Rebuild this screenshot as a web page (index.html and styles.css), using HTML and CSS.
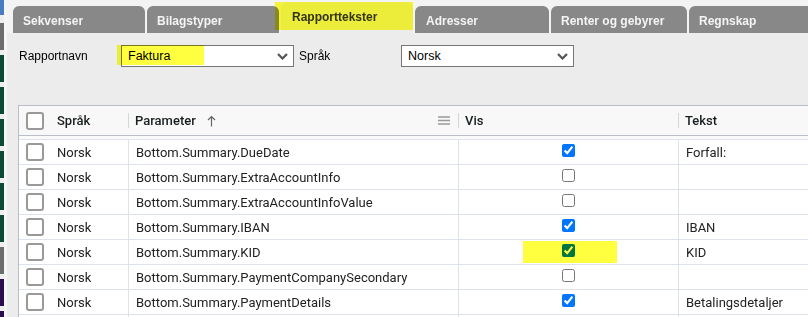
FILE: index.html
```html
<!DOCTYPE html>
<html lang="no">
  <head>
    <meta charset="UTF-8" />
    <title>Rapporttekster</title>
    <link rel="stylesheet" href="styles.css">
  </head>
  <body>
    <div class="app">
      <aside class="rail">
        <span class="blk blk-blue"></span>
        <span class="blk blk-grey"></span>
        <span class="blk blk-green"></span>
        <span class="blk blk-green"></span>
        <span class="blk blk-green"></span>
        <span class="blk blk-green"></span>
        <span class="blk blk-green"></span>
        <span class="blk blk-green"></span>
        <span class="blk blk-grey"></span>
        <span class="blk blk-purple"></span>
        <span class="blk blk-purple"></span>
      </aside>

      <main class="main">
        <nav class="tabs">
          <div class="tab">Sekvenser</div>
          <div class="tab">Bilagstyper</div>
          <div class="tab active">Rapporttekster<span class="hl hl-tab"></span></div>
          <div class="tab tab-adr">Adresser</div>
          <div class="tab tab-rent">Renter og gebyrer</div>
          <div class="tab">Regnskap</div>
        </nav>

        <div class="filters">
          <label>Rapportnavn</label>
          <div class="select">
            <span>Faktura</span>
            <svg class="chev" width="11" height="7" viewBox="0 0 11 7"><path d="M1 1 L5.5 5.5 L10 1" fill="none" stroke="#555" stroke-width="2.2"/></svg>
            <span class="hl hl-sel"></span>
          </div>
          <label class="lbl-lang">Språk</label>
          <div class="select">
            <span>Norsk</span>
            <svg class="chev" width="11" height="7" viewBox="0 0 11 7"><path d="M1 1 L5.5 5.5 L10 1" fill="none" stroke="#555" stroke-width="2.2"/></svg>
          </div>
        </div>

        <div class="grid">
          <div class="grid-head">
            <div class="hcell"><span class="pick"></span>Språk</div>
            <div class="hcell div">
              Parameter
              <svg class="sort" width="9" height="12" viewBox="0 0 9 12"><path d="M4.5 11.5 V1.5 M1 5 L4.5 1.5 L8 5" fill="none" stroke="#666" stroke-width="1.2"/></svg>
              <svg class="menu" width="12" height="9" viewBox="0 0 12 9"><path d="M0 1 H12 M0 4.5 H12 M0 8 H12" stroke="#999" stroke-width="1.4"/></svg>
            </div>
            <div class="hcell div">Vis</div>
            <div class="hcell div">Tekst</div>
          </div>
          <div class="grid-gap"></div>

          <div class="row">
            <div class="cell"><span class="pick"></span>Norsk</div>
            <div class="cell">Bottom.Summary.DueDate</div>
            <div class="cell vis"><input type="checkbox" checked></div>
            <div class="cell">Forfall:</div>
          </div>
          <div class="row">
            <div class="cell"><span class="pick"></span>Norsk</div>
            <div class="cell">Bottom.Summary.ExtraAccountInfo</div>
            <div class="cell vis"><input type="checkbox"></div>
            <div class="cell"></div>
          </div>
          <div class="row">
            <div class="cell"><span class="pick"></span>Norsk</div>
            <div class="cell">Bottom.Summary.ExtraAccountInfoValue</div>
            <div class="cell vis"><input type="checkbox"></div>
            <div class="cell"></div>
          </div>
          <div class="row">
            <div class="cell"><span class="pick"></span>Norsk</div>
            <div class="cell">Bottom.Summary.IBAN</div>
            <div class="cell vis"><input type="checkbox" checked></div>
            <div class="cell">IBAN</div>
          </div>
          <div class="row">
            <div class="cell"><span class="pick"></span>Norsk</div>
            <div class="cell">Bottom.Summary.KID</div>
            <div class="cell vis"><input type="checkbox" checked><span class="hl hl-kid"></span></div>
            <div class="cell">KID</div>
          </div>
          <div class="row">
            <div class="cell"><span class="pick"></span>Norsk</div>
            <div class="cell">Bottom.Summary.PaymentCompanySecondary</div>
            <div class="cell vis"><input type="checkbox"></div>
            <div class="cell"></div>
          </div>
          <div class="row">
            <div class="cell"><span class="pick"></span>Norsk</div>
            <div class="cell">Bottom.Summary.PaymentDetails</div>
            <div class="cell vis"><input type="checkbox" checked></div>
            <div class="cell">Betalingsdetaljer</div>
          </div>
          <div class="row">
            <div class="cell"></div>
            <div class="cell"></div>
            <div class="cell vis"></div>
            <div class="cell"></div>
          </div>
        </div>
      </main>
    </div>
  </body>
</html>
```

FILE: styles.css
```css
body {
  margin: 0;
  font-family: "Liberation Sans", Arial, sans-serif;
  background-color: #ececec;
  overflow: hidden;
}

.app {
  display: flex;
  height: 317px;
  overflow: hidden;
}

/* left app rail (cropped) */
.rail {
  width: 4px;
  display: flex;
  flex-direction: column;
  gap: 5px;
  background-color: #eeeeee;
}

.blk {
  height: 27px;
  flex: none;
}

.blk-blue {
  height: 15px;
  margin-bottom: 3px;
  background-color: #4a7cc4;
}

.blk-grey {
  background-color: #6d6d6d;
}

.blk-green {
  background-color: #0d4a33;
}

.blk-purple {
  background-color: #2b0d4f;
}

.main {
  flex: 1;
  min-width: 0;
  overflow: hidden;
  border-left: 3px solid #f6f6f6;
  background-color: #ececec;
}

/* tabs */
.tabs {
  display: flex;
  align-items: flex-end;
  gap: 2px;
  height: 31px;
  padding: 2px 0 0 6px;
  background-color: #f3f3f3;
}

.tab {
  flex: none;
  box-sizing: border-box;
  width: 132px;
  height: 27px;
  padding: 8px 10px 0;
  background-color: #888888;
  color: #f4f4f4;
  font-size: 12px;
  font-weight: bold;
  line-height: 14px;
  border-radius: 6px 6px 0 0;
  white-space: nowrap;
}

.tab.active {
  position: relative;
  height: 31px;
  padding-left: 11px;
  background-color: #ececec;
  color: #333;
}

.tab-adr {
  width: 134px;
  padding-left: 11px;
}

.tab-rent {
  width: 136px;
}

/* marker highlights */
.hl {
  position: absolute;
  background-color: #ffff40;
  mix-blend-mode: multiply;
  pointer-events: none;
}

.hl-tab {
  left: -6px;
  top: 0;
  width: 138px;
  height: 28px;
}

.hl-sel {
  left: -5px;
  top: -1px;
  width: 87px;
  height: 20px;
}

.hl-kid {
  left: 64px;
  top: 1px;
  width: 94px;
  height: 22px;
}

/* report / language pickers */
.filters {
  display: flex;
  align-items: center;
  height: 22px;
  padding: 12px 0 0 12px;
}

.filters label {
  width: 102px;
  font-size: 12px;
  color: #000;
}

.filters .lbl-lang {
  margin-left: 5px;
}

.select {
  position: relative;
  display: flex;
  align-items: center;
  box-sizing: border-box;
  width: 173px;
  height: 22px;
  padding: 0 5px 0 6px;
  border: 1px solid #767676;
  background-color: #fff;
  font-size: 12.5px;
  color: #000;
}

.chev {
  margin-left: auto;
}

/* data grid */
.grid {
  margin: 38px -20px 0 11px;
  border: 1px solid #babfc7;
  background-color: #fff;
  font-family: Roboto, "Liberation Sans", sans-serif;
  font-size: 13px;
  color: #222;
}

.grid-head,
.row {
  display: grid;
  grid-template-columns: 109px 330px 220px 1fr;
}

.grid-head {
  height: 29px;
  background-color: #f8f8f8;
  border-bottom: 1px solid #babfc7;
  font-weight: 500;
  color: #181d1f;
}

.grid-gap {
  height: 3px;
  background-color: #fafafa;
  border-bottom: 1px solid #dde2eb;
}

.hcell {
  position: relative;
  display: flex;
  align-items: center;
  padding: 0 8px 0 7px;
}

.hcell.div::before {
  content: "";
  position: absolute;
  left: 0;
  top: 7px;
  width: 1px;
  height: 15px;
  background-color: #d3d6da;
}

.sort {
  margin-left: 11px;
}

.menu {
  margin-left: auto;
}

.row {
  height: 24px;
  border-bottom: 1px solid #dde2eb;
}

.cell {
  display: flex;
  align-items: center;
  padding-left: 7px;
  white-space: nowrap;
}

.cell + .cell {
  border-left: 1px solid #dde2eb;
}

.cell.vis {
  position: relative;
  justify-content: center;
  padding-left: 0;
}

.cell.vis input {
  margin: 0 0 3px 0;
}

.pick {
  flex: none;
  box-sizing: border-box;
  width: 18px;
  height: 18px;
  margin-right: 13px;
  border: 2px solid #999;
  border-radius: 3px;
  background-color: #fff;
}
```
